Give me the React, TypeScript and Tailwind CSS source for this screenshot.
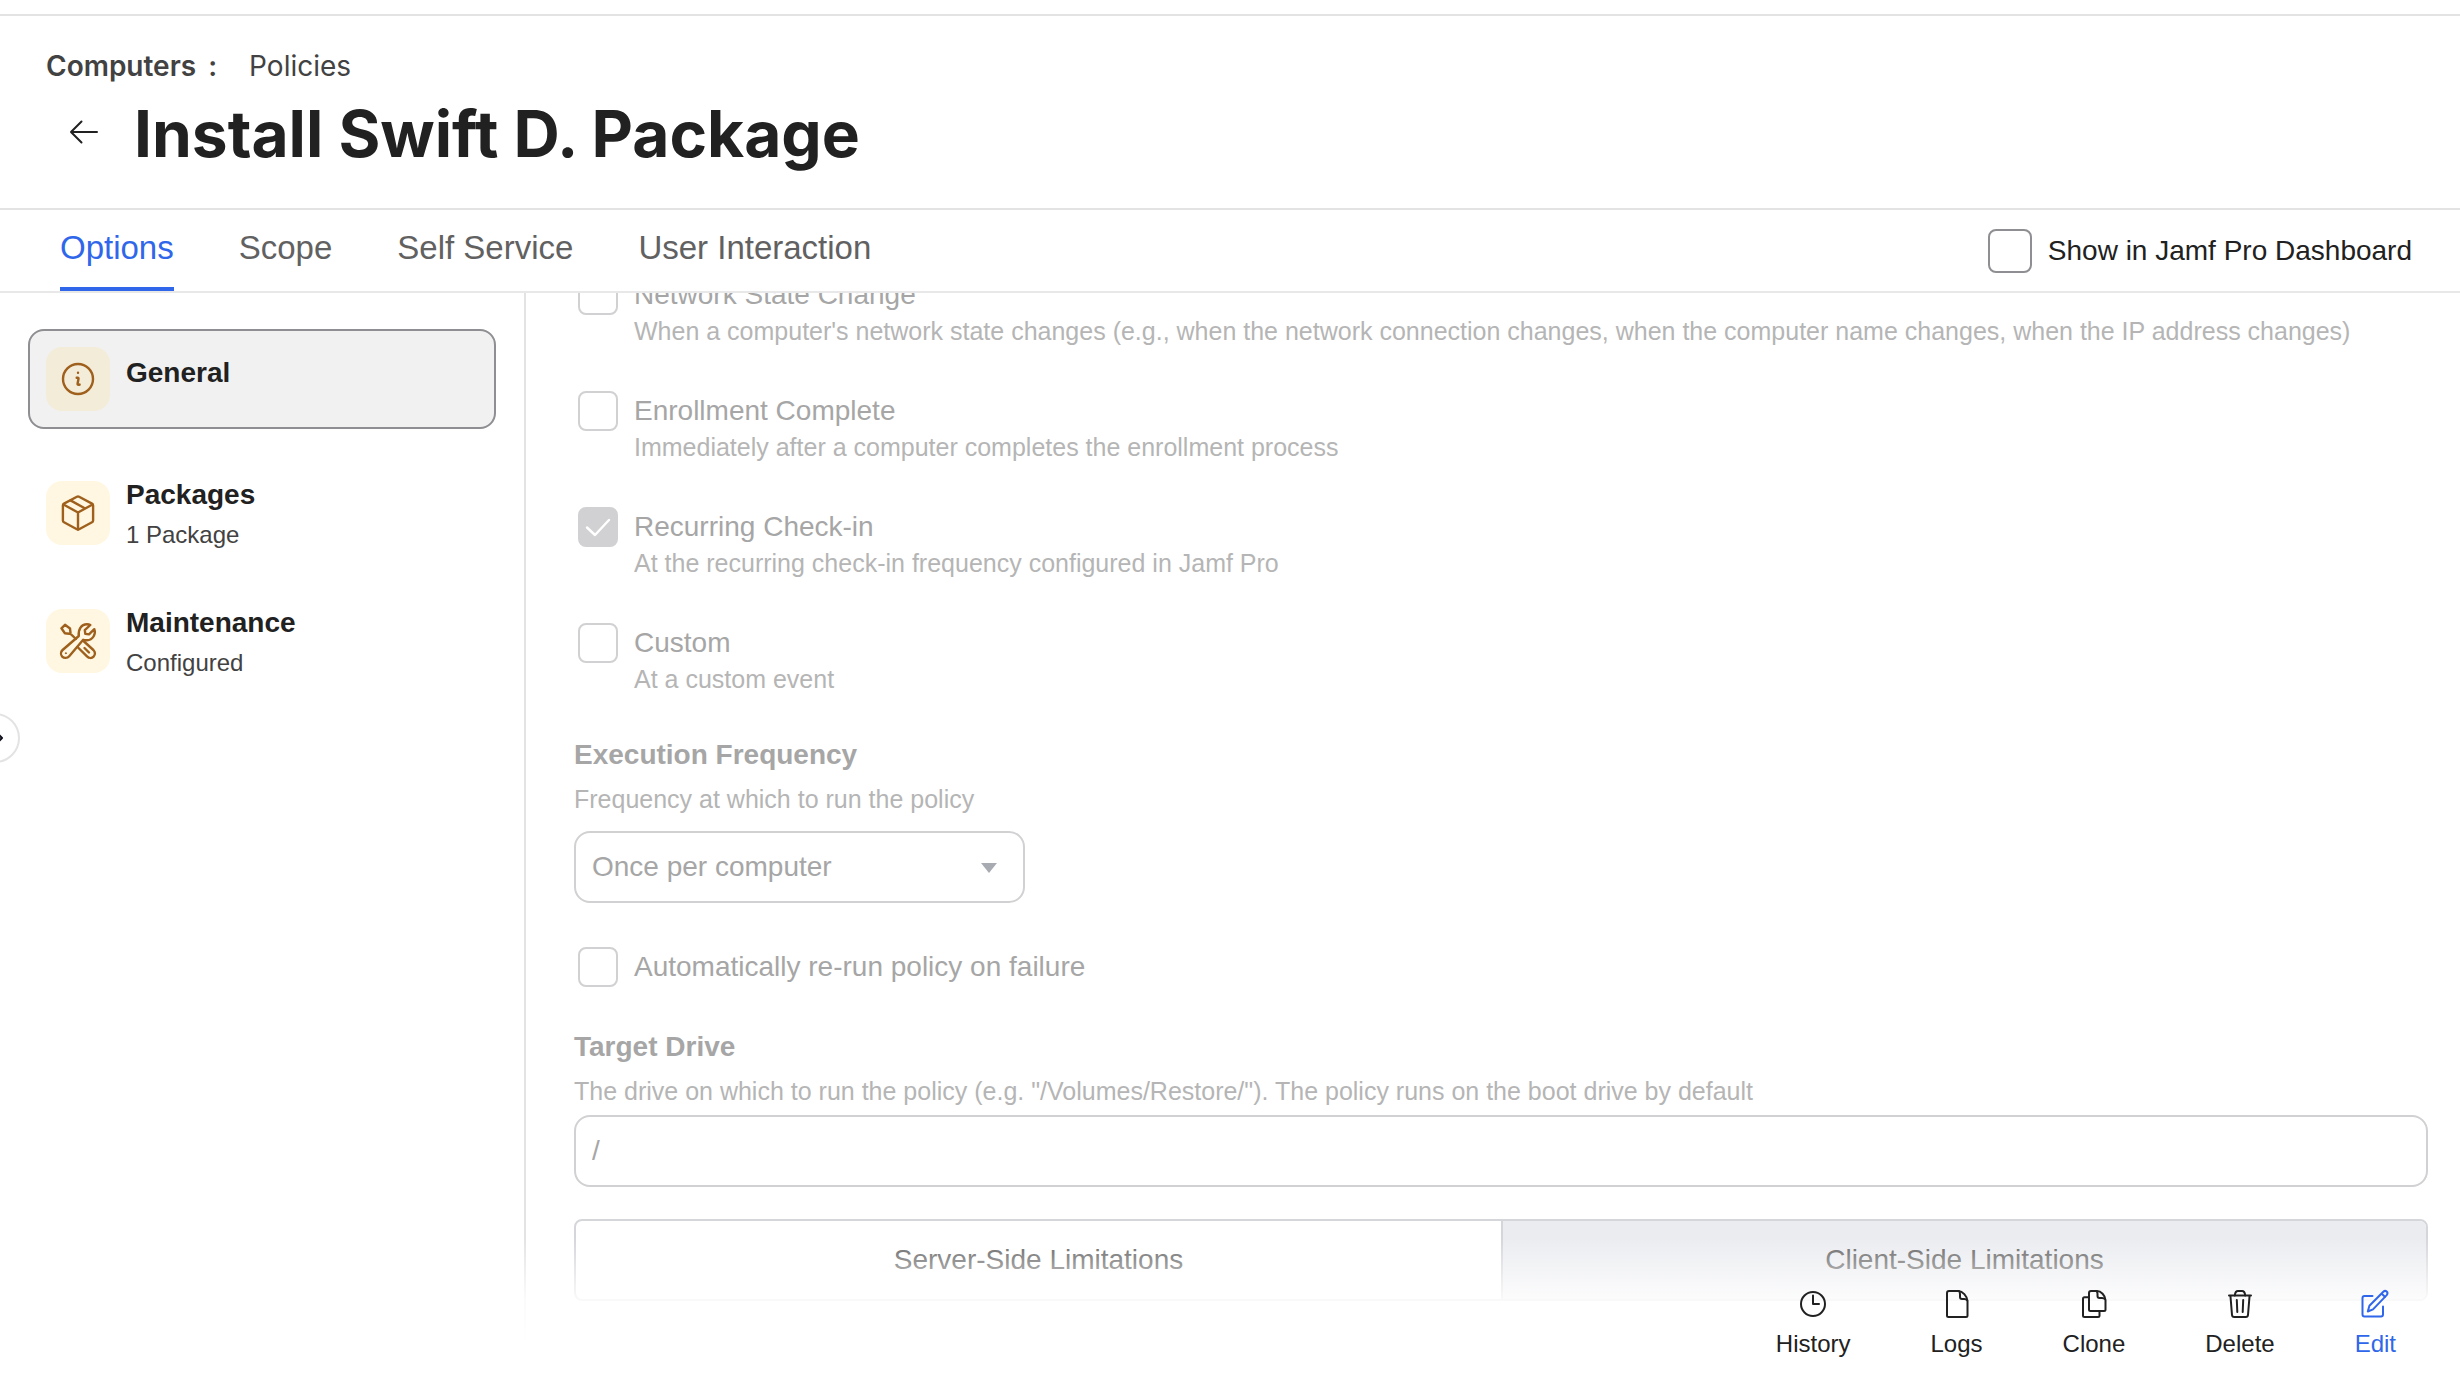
import clsx from "clsx";
import type { ReactNode } from "react";

const tabs = ["Options", "Scope", "Self Service", "User Interaction"];

const triggers = [
  {
    id: "network",
    label: "Network State Change",
    hint: "When a computer's network state changes (e.g., when the network connection changes, when the computer name changes, when the IP address changes)",
    checked: false,
  },
  {
    id: "enrollment",
    label: "Enrollment Complete",
    hint: "Immediately after a computer completes the enrollment process",
    checked: false,
  },
  {
    id: "checkin",
    label: "Recurring Check-in",
    hint: "At the recurring check-in frequency configured in Jamf Pro",
    checked: true,
  },
  { id: "custom", label: "Custom", hint: "At a custom event", checked: false },
];

// 36px icons for the payload list
function PayloadIcon({ children }: { children: ReactNode }) {
  return (
    <svg
      viewBox="0 0 36 36"
      className="size-9 overflow-visible"
      fill="none"
      stroke="currentColor"
      strokeWidth="2.4"
      strokeLinecap="round"
      strokeLinejoin="round"
      aria-hidden="true"
    >
      {children}
    </svg>
  );
}

// 32px icons for the action bar
function ActionIcon({ children }: { children: ReactNode }) {
  return (
    <svg
      viewBox="0 0 32 32"
      className="size-8"
      fill="none"
      stroke="currentColor"
      strokeWidth="2"
      strokeLinecap="round"
      strokeLinejoin="round"
      aria-hidden="true"
    >
      {children}
    </svg>
  );
}

function InfoIcon() {
  return (
    <PayloadIcon>
      <circle cx="18" cy="18" r="15" />
      <path d="M16.7 16.8h1q1 0 .8 1l-.9 4.600q-.3 1.700 1.200 1.500l.8-.3" />
      <circle cx="18" cy="11.800" r=".6" fill="currentColor" strokeWidth="1.2" />
    </PayloadIcon>
  );
}

function PackageIcon() {
  return (
    <PayloadIcon>
      <path d="M16.900 1.800q1.100-.6 2.200 0L32 8.600q1.100.6 1.100 1.800v15q0 1.200-1.100 1.800L19.100 34.200q-1.100.6-2.200 0L4 27.200q-1.100-.6-1.100-1.800v-15Q2.900 9.200 4 8.600Z" />
      <path d="m3.500 9.500 14.500 8 14.500-8M18 17.500v17M10.500 5.400l14.700 8.100" />
    </PayloadIcon>
  );
}

function ToolsIcon() {
  return (
    <PayloadIcon>
      <path d="M18.800 13C18 7 21 1.200 27 1.200q2 0 3.300.8L24.800 7.200l.5 3.700 3.700.5 5.300-5.200C36 11 33 17.200 27 17.200q-2 .2-3.800-.4L9.200 33.200c-1.900 2.200-5.200 2.200-7 .4-1.600-1.800-1.600-4.800.4-6.600Z" />
      <circle cx="5.800" cy="30.200" r=".5" fill="currentColor" strokeWidth="1" />
      <path d="M10.500 9.800 10 5.500 5 1.800 1.400 5.300l3.500 4.900 4.400.6ZM10 10.300l6 5.700" />
      <path d="m23.500 18 9.900 9c2 2 2 4.800.2 6.600s-4.600 1.800-6.600-.2L17.500 24M24.500 25l4.500 4.500" />
    </PayloadIcon>
  );
}

function Checkbox({ id, label, hint, checked }: { id: string; label: string; hint?: string; checked?: boolean }) {
  return (
    <div className="pl-1">
      <div className="flex h-10 items-center gap-4">
        <span className="relative size-10 shrink-0">
          <input
            id={id}
            type="checkbox"
            disabled
            defaultChecked={checked}
            className="block size-10 appearance-none rounded-lg border-2 border-[#d1d1d3] bg-white checked:bg-[#d1d1d3]"
          />
          {checked && (
            <svg
              viewBox="0 0 40 40"
              className="pointer-events-none absolute inset-0"
              fill="none"
              stroke="white"
              strokeWidth="2.400"
              strokeLinecap="round"
              strokeLinejoin="round"
            >
              <path d="m9 20.500 8 7.500L31 13" />
            </svg>
          )}
        </span>
        <label htmlFor={id} className="text-[28px] leading-10 text-[#a6a6a6]">{label}</label>
      </div>
      {hint && <p className="ml-14 text-[25px] leading-8 text-[#b5b5b5]">{hint}</p>}
    </div>
  );
}

function NavItem({ icon, title, detail, active }: { icon: ReactNode; title: string; detail?: string; active?: boolean }) {
  return (
    <li>
      <button
        type="button"
        className={clsx(
          "flex w-full items-center gap-4 rounded-2xl border-2 p-4 text-left",
          active ? "mb-3 border-[#8e8e93] bg-[#f1f1f1]" : "border-transparent",
        )}
      >
        <span
          className={clsx(
            "flex size-16 shrink-0 items-center justify-center rounded-2xl text-[#9e601c]",
            active ? "bg-[#f3ecd8]" : "bg-[#fff7e1]",
          )}
        >
          {icon}
        </span>
        <span className="flex min-h-[52px] flex-col">
          <span className="text-[28px] leading-10 font-bold text-[#212121]">{title}</span>
          {detail && <span className="mt-1 text-[24px] leading-8 text-[#424242]">{detail}</span>}
        </span>
      </button>
    </li>
  );
}

function Action({ icon, label, primary }: { icon: ReactNode; label: string; primary?: boolean }) {
  return (
    <button
      type="button"
      className={clsx("flex flex-col items-center gap-2 text-[24px] leading-8", primary ? "text-[#3067ea]" : "text-[#212121]")}
    >
      {icon}
      {label}
    </button>
  );
}

export default function App() {
  return (
    <div className="relative flex h-screen flex-col overflow-hidden bg-white font-['Liberation_Sans',Arial,sans-serif]">
      <div className="h-4 shrink-0 border-b-2 border-[#e3e3e3]" />

      {/* Page header */}
      <header className="shrink-0 border-b-2 border-[#e3e3e3] px-[46px] pt-[30px] pb-[30px] font-[Inter,sans-serif]">
        <nav className="flex text-[28px] leading-10 text-[#424242]">
          <span className="font-semibold">Computers</span>
          <span className="ml-3 font-semibold">:</span>
          <a href="#policies" className="ml-8">Policies</a>
        </nav>
        <div className="mt-1 flex items-center pl-5">
          <button type="button" aria-label="Back" className="text-[#212121]">
            <svg
              viewBox="0 0 36 36"
              className="size-9"
              fill="none"
              stroke="currentColor"
              strokeWidth="2"
              strokeLinecap="round"
              strokeLinejoin="round"
            >
              <path d="M31 16H5M15.500 5.500 5 16l10.500 10.500" />
            </svg>
          </button>
          <h1 className="ml-8 text-[64px] leading-[88px] font-bold text-[#212121]">Install Swift D. Package</h1>
        </div>
      </header>

      {/* Tabs */}
      <div className="flex h-[83px] shrink-0 items-stretch justify-between border-b-2 border-[#e8e8e8] pr-12 pl-[60px]">
        <nav className="flex gap-[65px]">
          {tabs.map((tab) => (
            <a
              key={tab}
              href={`#${tab}`}
              className={clsx(
                "border-b-4 pt-[18px] text-[33px] leading-10",
                tab === "Options" ? "border-[#3067ea] text-[#3067ea]" : "border-transparent text-[#616161]",
              )}
            >
              {tab}
            </a>
          ))}
        </nav>
        <label className="flex items-center gap-4 text-[28px] text-[#212121]">
          <input type="checkbox" className="size-11 appearance-none rounded-lg border-2 border-[#8e8e93] bg-white" />
          Show in Jamf Pro Dashboard
        </label>
      </div>

      <div className="flex min-h-0 flex-1">
        {/* Payload list */}
        <aside className="w-[526px] shrink-0 border-r-2 border-[#e3e3e3] px-7 pt-9">
          <ul className="flex flex-col gap-4">
            <NavItem icon={<InfoIcon />} title="General" active />
            <NavItem icon={<PackageIcon />} title="Packages" detail="1 Package" />
            <NavItem icon={<ToolsIcon />} title="Maintenance" detail="Configured" />
          </ul>
        </aside>

        {/* Form */}
        <main className="min-w-0 flex-1 overflow-hidden pr-8 pl-12">
          <div className="-mt-[18px] flex flex-col gap-11">
            {triggers.map((trigger) => (
              <Checkbox key={trigger.id} {...trigger} />
            ))}
          </div>

          <div className="mt-10">
            <label htmlFor="frequency" className="block text-[28px] leading-10 font-bold text-[#a6a6a6]">Execution Frequency</label>
            <p className="mt-2 text-[25px] leading-8 text-[#b5b5b5]">Frequency at which to run the policy</p>
            <div className="relative mt-4 w-[451px]">
              <select
                id="frequency"
                disabled
                className="block h-[72px] w-full appearance-none rounded-2xl border-2 border-[#d1d1d3] bg-white px-4 text-[28px] text-[#a6a6a6] opacity-100"
              >
                <option>Once per computer</option>
              </select>
              <svg viewBox="0 0 16 10" className="pointer-events-none absolute top-8 right-7 h-[10px] w-4" fill="#a8abb1">
                <path d="M0 0h16L8 10Z" />
              </svg>
            </div>
          </div>

          <div className="mt-11">
            <Checkbox id="rerun" label="Automatically re-run policy on failure" />
          </div>

          <div className="mt-10">
            <label htmlFor="drive" className="block text-[28px] leading-10 font-bold text-[#a6a6a6]">Target Drive</label>
            <p className="mt-2 text-[25px] leading-8 text-[#b5b5b5]">
              The drive on which to run the policy (e.g. "/Volumes/Restore/"). The policy runs on the boot drive by default
            </p>
            <input
              id="drive"
              type="text"
              disabled
              defaultValue="/"
              className="mt-2 block h-[72px] w-full rounded-2xl border-2 border-[#d1d1d3] bg-white px-4 text-[28px] text-[#a6a6a6]"
            />
          </div>

          <div className="mt-8 grid h-[82px] grid-cols-2 overflow-hidden rounded-lg border-2 border-[#d5d6da] text-[28px] text-[#616161]">
            <button type="button">Server-Side Limitations</button>
            <button type="button" className="border-l-2 border-[#d5d6da] bg-[#ebecf0]">Client-Side Limitations</button>
          </div>
        </main>
      </div>

      {/* Sidebar expander */}
      <button
        type="button"
        aria-label="Expand navigation"
        className="absolute top-[713px] -left-[30px] flex size-[50px] items-center justify-end rounded-full border-2 border-[#e3e3e3] bg-white pr-3.5 text-[#0f0f1e]"
      >
        <svg viewBox="0 0 8 12" className="h-3 w-2" fill="none" stroke="currentColor" strokeWidth="2" strokeLinecap="round" strokeLinejoin="round">
          <path d="m2 2 4 4-4 4" />
        </svg>
      </button>

      {/* Action bar fading over the form */}
      <div className="absolute inset-x-0 bottom-0 flex justify-end gap-20 bg-linear-to-b from-transparent from-10% via-white/85 via-45% to-white to-70% px-16 pt-[68px] pb-9">
        <Action
          label="History"
          icon={
            <ActionIcon>
              <circle cx="16" cy="16" r="12" />
              <path d="M16 7.500V16h6" />
            </ActionIcon>
          }
        />
        <Action
          label="Logs"
          icon={
            <ActionIcon>
              <path d="M8 3h9.500q3 0 5.800 3.200Q26.500 9.800 26.500 13v14.500q0 1.500-1.500 1.500H7.500Q6 29 6 27.500V5q0-2 2-2Z" />
              <path d="M18 3q1 1.300 1 3.200V9q0 2 2 2h2.300q2 0 3 1.300" />
            </ActionIcon>
          }
        />
        <Action
          label="Clone"
          icon={
            <ActionIcon>
              <path d="M13 3h6q3 0 5.600 2.800Q27.500 9 27.500 12v9.500q0 1.500-1.500 1.500H12.500Q11 23 11 21.500V5q0-2 2-2Z" />
              <path d="M18.500 3q1 1 1 2.800V8q0 2 2 2H24q2 0 3 1.200M11 9.200H6.500Q5 9.200 5 10.700V27.500Q5 29 6.500 29H20q1.500 0 1.500-1.500V23" />
            </ActionIcon>
          }
        />
        <Action
          label="Delete"
          icon={
            <ActionIcon>
              <path d="M5 7.500h22M6.500 8.500 8 27q.2 2 2.200 2h11.600q2 0 2.200-2l1.500-18.500" />
              <path d="M10.800 7.500Q11.200 3 14 3h4q2.800 0 3.200 4.500M12.800 12l.5 12M19.200 12l-.5 12" />
            </ActionIcon>
          }
        />
        <Action
          label="Edit"
          primary
          icon={
            <ActionIcon>
              <path d="M13.500 8H5.500Q3.500 8 3.500 10v16.500q0 2 2 2H22q2 0 2-2v-8" />
              <path d="m8.800 23.500 1.600-5.700L24.300 3.700q1.800-1.600 3.400-.1t0 3.500L14 21.400ZM22.500 5.600l3.600 3.400" />
            </ActionIcon>
          }
        />
      </div>
    </div>
  );
}
